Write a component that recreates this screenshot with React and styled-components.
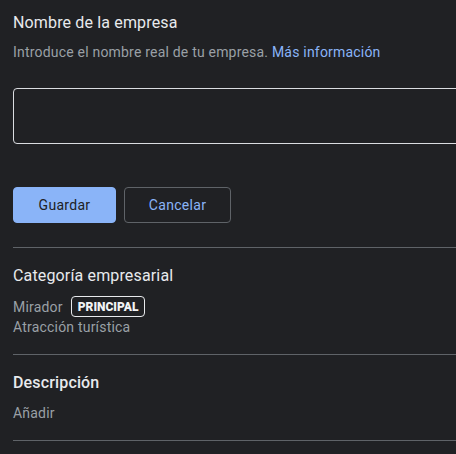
import styled, { createGlobalStyle } from "styled-components";

const GlobalStyle = createGlobalStyle`
  html, body {
    margin: 0;
    padding: 0;
    background: #202124;
    overflow: hidden;
  }
  body {
    font-family: Roboto, "Liberation Sans", Arial, sans-serif;
  }
`;

const App = () => {
  return (
    <Page>
      <GlobalStyle />
      <Section>
        <Heading>Nombre de la empresa</Heading>
        <Hint>
          Introduce el nombre real de tu empresa.{" "}
          <HelpLink href="#">Más información</HelpLink>
        </Hint>
        <NameInput type="text" />
        <ButtonRow>
          <Button $primary>Guardar</Button>
          <Button>Cancelar</Button>
        </ButtonRow>
      </Section>
      <Divider />
      <InfoBlock>
        <Heading>Categoría empresarial</Heading>
        <Values>
          <ValueRow>
            <Value>Mirador</Value>
            <Chip>PRINCIPAL</Chip>
          </ValueRow>
          <Value>Atracción turística</Value>
        </Values>
      </InfoBlock>
      <Divider />
      <InfoBlock>
        <Heading $strong>Descripción</Heading>
        <Values>
          <Value>Añadir</Value>
        </Values>
      </InfoBlock>
      <Divider />
    </Page>
  );
};

export default App;

const Page = styled.div`
  width: 540px;
  padding: 11px 0 0 13px;
  display: flex;
  flex-direction: column;
`;

const Section = styled.div`
  display: flex;
  flex-direction: column;
  padding-bottom: 24px;
`;

const Heading = styled.div`
  font-size: 16px;
  line-height: 24px;
  letter-spacing: 0.15px;
  color: #e8eaed;
  font-weight: ${(p) => (p.$strong ? 500 : 400)};
`;

const Hint = styled.div`
  margin-top: 7px;
  font-size: 14px;
  line-height: 20px;
  letter-spacing: 0.2px;
  color: #9aa0a6;
`;

const HelpLink = styled.a`
  color: #8ab4f8;
  text-decoration: none;
`;

const NameInput = styled.input`
  margin-top: 26px;
  height: 56px;
  box-sizing: border-box;
  background: transparent;
  border: 1px solid #dadce0;
  border-radius: 4px;
  outline: none;
  color: #e8eaed;
  font: inherit;
  padding: 0 16px;
`;

const ButtonRow = styled.div`
  display: flex;
  gap: 8px;
  margin-top: 43px;
`;

const Button = styled.button`
  box-sizing: border-box;
  height: 36px;
  padding: 0 23px;
  border-radius: 4px;
  font-family: inherit;
  font-size: 14px;
  font-weight: 400;
  letter-spacing: 0.3px;
  cursor: pointer;
  background: ${(p) => (p.$primary ? "#8ab4f8" : "transparent")};
  color: ${(p) => (p.$primary ? "#202124" : "#8ab4f8")};
  border: 1px solid ${(p) => (p.$primary ? "#8ab4f8" : "#5f6368")};
  min-width: ${(p) => (p.$primary ? "103px" : "107px")};
`;

const Divider = styled.hr`
  margin: 0;
  border: none;
  border-top: 1px solid #5f6368;
`;

const InfoBlock = styled.div`
  display: flex;
  flex-direction: column;
  padding: 16px 0 17px;
`;

const Values = styled.div`
  margin-top: 8px;
  display: flex;
  flex-direction: column;
`;

const ValueRow = styled.div`
  display: flex;
  align-items: center;
  gap: 8px;
  height: 21px;
`;

const Value = styled.div`
  font-size: 14px;
  line-height: 20px;
  letter-spacing: 0.2px;
  color: #9aa0a6;
`;

const Chip = styled.span`
  box-sizing: border-box;
  height: 21px;
  display: inline-flex;
  align-items: center;
  padding: 0 6px;
  border: 1px solid #e8eaed;
  border-radius: 4px;
  color: #f1f3f4;
  font-size: 12px;
  font-weight: 900;
  letter-spacing: 0;
`;
